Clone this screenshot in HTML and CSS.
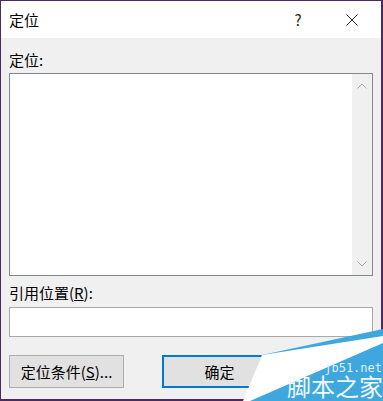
FILE: index.html
```html
<!DOCTYPE html>
<html lang="zh-CN">
<head>
    <meta charset="UTF-8">
    <title>定位</title>
    <link rel="stylesheet" href="styles.css">
</head>
<body>
    <div class="dialog">
        <div class="titlebar">
            <span class="title">定位</span>
            <span class="title-btn">?</span>
            <span class="title-btn">
                <svg width="12" height="12" viewBox="0 0 12 12"><path d="M0.5 0.5L11.5 11.5M11.5 0.5L0.5 11.5" stroke="#222" stroke-width="1" fill="none"/></svg>
            </span>
        </div>
        <div class="content">
            <label class="field-label">定位:</label>
            <div class="listbox">
                <div class="list-area"></div>
                <div class="scrollbar">
                    <svg width="10" height="6" viewBox="0 0 10 6"><path d="M0.5 5.5L5 1L9.5 5.5" stroke="#a6a6a6" fill="none"/></svg>
                    <svg width="10" height="6" viewBox="0 0 10 6"><path d="M0.5 0.5L5 5L9.5 0.5" stroke="#a6a6a6" fill="none"/></svg>
                </div>
            </div>
            <label class="field-label ref-label">引用位置(<u>R</u>):</label>
            <div class="textbox"></div>
            <div class="buttons">
                <button class="btn">定位条件(<u>S</u>)...</button>
                <button class="btn btn-default">确定</button>
            </div>
        </div>

        <div class="watermark">
            <svg width="153" height="81" viewBox="230 320 153 81">
                <polygon points="262,355 383,329 383,401 245,401" fill="#3ea7de"/>
                <polygon points="243,401 262,355 383,336 383,343 250,401" fill="#ffffff"/>
            </svg>
            <span class="wm-url">jb51.net</span>
            <span class="wm-name">脚本之家</span>
        </div>
    </div>
</body>
</html>
```

FILE: styles.css
```css
/* Dialoogvenster */
body {
    margin: 0;
    padding: 0;
    font-family: "Noto Sans CJK SC", "Noto Sans", sans-serif;
    font-size: 15px;
    color: #000;
    background-color: #f0f0f0;
}
.dialog {
    position: relative;
    width: 383px;
    height: 401px;
    box-sizing: border-box;
    border: 1px solid #4b2b5e;
    border-right-width: 2px;
    border-bottom-width: 2px;
    background-color: #f0f0f0;
}

/* Titelbalk */
.titlebar {
    height: 37px;
    display: flex;
    align-items: center;
    background-color: #fff;
    padding: 0 6px 0 8px;
    gap: 8px;
}
.title {
    flex: 1;
    line-height: 20px;
}
.title-btn {
    width: 46px;
    height: 37px;
    display: flex;
    align-items: center;
    justify-content: center;
    color: #222;
}

/* Inhoud */
.content {
    padding: 0 8px;
}
.field-label {
    display: block;
    line-height: 20px;
    margin-top: 12px;
}
.ref-label {
    margin-top: 7px;
}
.listbox {
    margin-top: 3px;
    height: 203px;
    box-sizing: border-box;
    border: 1px solid #828790;
    background-color: #fff;
    display: flex;
}
.list-area {
    flex: 1;
}
.scrollbar {
    width: 20px;
    background-color: #f0f0f0;
    display: flex;
    flex-direction: column;
    align-items: center;
    justify-content: space-between;
    padding: 9px 0 8px;
}
.textbox {
    margin-top: 4px;
    height: 30px;
    box-sizing: border-box;
    border: 1px solid #a9a9a9;
    background-color: #fff;
}

/* Knoppen */
.buttons {
    display: flex;
    gap: 38px;
    margin-top: 18px;
}
.btn {
    flex-shrink: 0;
    width: 115px;
    height: 33px;
    box-sizing: border-box;
    border: 1px solid #adadad;
    background-color: #e1e1e1;
    font-family: inherit;
    font-size: 15px;
    color: #000;
    padding: 0;
}
.btn-default {
    border: 2px solid #0078d7;
}

/* Watermerk */
.watermark {
    position: absolute;
    right: -2px;
    bottom: -2px;
    width: 153px;
    height: 81px;
}
.watermark svg {
    display: block;
}
.wm-url {
    position: absolute;
    right: 1px;
    top: 42px;
    font-family: "DejaVu Sans Mono", monospace;
    font-size: 12px;
    line-height: 12px;
    color: #dff1fb;
}
.wm-name {
    position: absolute;
    right: 0;
    top: 54px;
    font-size: 24px;
    line-height: 24px;
    color: #eef8fd;
}
```
